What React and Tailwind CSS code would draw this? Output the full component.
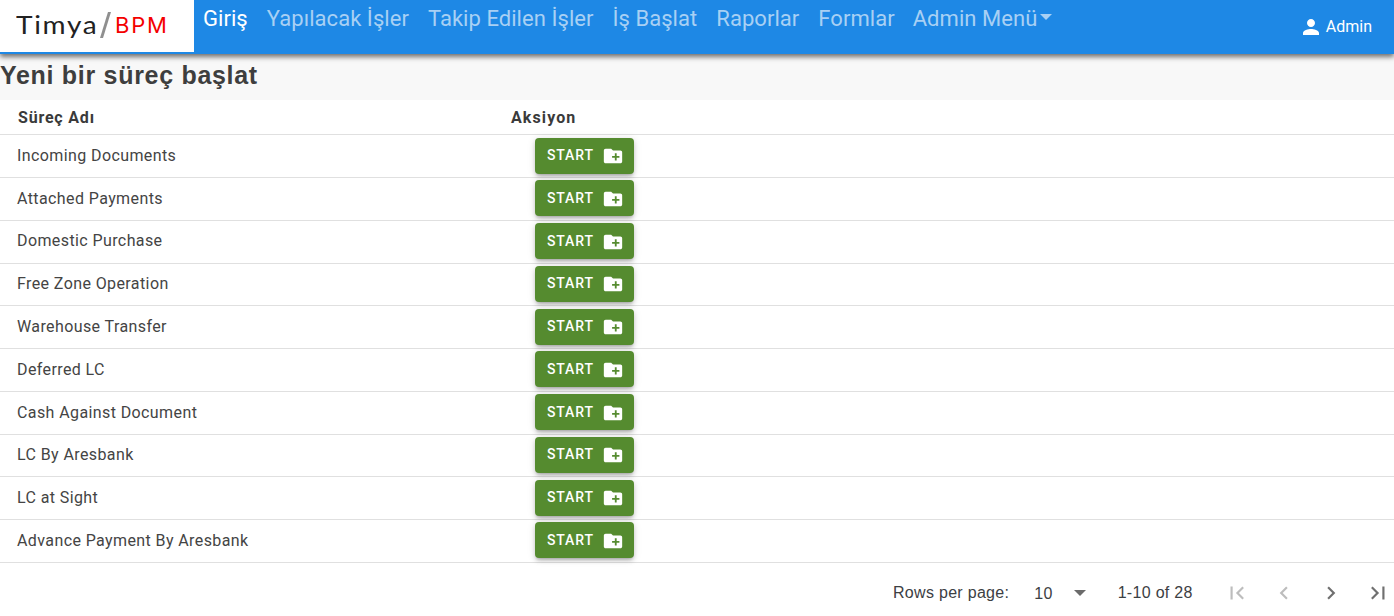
const rows = ["Incoming Documents","Attached Payments","Domestic Purchase","Free Zone Operation","Warehouse Transfer","Deferred LC","Cash Against Document","LC By Aresbank","LC at Sight","Advance Payment By Aresbank"];
const nav = ["Yapılacak İşler","Takip Edilen İşler","İş Başlat","Raporlar","Formlar"];

function FolderPlus() {
  return (
    <svg viewBox="0 0 24 24" width="22" height="22" fill="#fff" className="ml-[8px] mt-px">
      <path d="M20 6h-8l-2-2H4c-1.11 0-1.99.89-1.99 2L2 18c0 1.11.89 2 2 2h16c1.11 0 2-.89 2-2V8c0-1.11-.89-2-2-2zm-1 8h-3v3h-2v-3h-3v-2h3V9h2v3h3v2z" />
    </svg>
  );
}

function Chevron({ d, color }) {
  return (
    <svg viewBox="0 0 24 24" width="26" height="26" fill={color}><path d={d} /></svg>
  );
}

export default function App() {
  return (
    <div className="min-h-[616px] bg-white font-['Roboto',sans-serif] text-[#3c4043] overflow-hidden">
      <header className="relative z-10 flex h-[54px] bg-[#1e88e5] shadow-[0_3px_5px_rgba(0,0,0,0.55)]">
        <div className="flex h-[52px] w-[194px] items-center bg-white pb-[3px] pl-[16px]">
          <span className="w-[85px] origin-left scale-x-[1.12] font-['Lato',sans-serif] text-[25px] leading-none tracking-[1.5px] text-[#222]">Timya</span>
          <span className="ml-[3px] h-[26px] w-[3px] skew-x-[-17deg] bg-[#8f8f8f]"></span>
          <span className="ml-[8px] font-['Inter',sans-serif] text-[22px] leading-none tracking-[1.8px] text-[#f40000]">BPM</span>
        </div>
        <nav className="flex h-[36px] items-center pl-[9px] text-[22px] tracking-[0.05px]">
          <span className="text-white">Giriş</span>
          {nav.map((n) => (
            <span key={n} className="ml-[19px] text-[#a8d0f4]">{n}</span>
          ))}
          <span className="ml-[18px] text-[#a8d0f4]">Admin Menü</span>
          <span className="ml-[3px] mb-[3px] h-0 w-0 border-x-[6px] border-t-[6px] border-x-transparent border-t-[#a8d0f4]"></span>
        </nav>
        <div className="ml-auto mr-[22px] flex h-[54px] items-center text-white">
          <svg viewBox="0 0 24 24" width="24" height="24" fill="#fff"><path d="M12 12c2.21 0 4-1.79 4-4s-1.79-4-4-4-4 1.79-4 4 1.79 4 4 4zm0 2c-2.67 0-8 1.34-8 4v2h16v-2c0-2.66-5.33-4-8-4z" /></svg>
          <span className="ml-[3px] text-[16px]">Admin</span>
        </div>
      </header>

      <div className="flex h-[46px] items-center bg-[#f8f8f8] pb-[2px] font-['Liberation_Sans',sans-serif] text-[25px] font-bold tracking-[0.7px] text-[#3e3e3e]">Yeni bir süreç başlat</div>

      <div className="flex h-[35.3px] items-center border-b border-[#e0e0e0] pt-[1px] text-[16px] font-bold tracking-[0.8px] text-[#3a3a3a]">
        <div className="w-[511px] pl-[18px]">Süreç Adı</div>
        <div className="tracking-[1.1px]">Aksiyon</div>
      </div>
      {rows.map((r) => (
        <div key={r} className="flex h-[42.77px] items-center border-b border-[#e0e0e0] text-[16px] tracking-[0.4px] text-[#444]">
          <div className="-mt-[0.5px] w-[535px] pl-[17px]">{r}</div>
          <button className="-mt-[1.3px] flex h-[36px] w-[99px] items-center rounded-[4px] bg-[#558b2f] pl-[12px] text-[14px] font-medium tracking-[0.85px] text-white shadow-[0_3px_3px_-2px_rgba(0,0,0,0.2),0_3px_4px_0_rgba(0,0,0,0.14),0_1px_8px_0_rgba(0,0,0,0.12)]">
            START<FolderPlus />
          </button>
        </div>
      ))}

      <div className="flex h-[60px] items-center font-['Liberation_Sans',sans-serif] text-[16px] tracking-[0.3px] text-[#3c4043]">
        <span className="ml-[893px]">Rows per page:</span>
        <span className="ml-[25px] mt-[2px]">10</span>
        <span className="ml-[21px] h-0 w-0 border-x-[6px] border-t-[6px] border-x-transparent border-t-[#6b6b6b]"></span>
        <span className="ml-[32px]">1-10 of 28</span>
        <div className="ml-[31px] flex items-center gap-[21px]">
          <Chevron color="#bdbdbd" d="M18.41 16.59L13.82 12l4.59-4.59L17 6l-6 6 6 6zM6 6h2v12H6z" />
          <Chevron color="#bdbdbd" d="M15.41 7.41L14 6l-6 6 6 6 1.41-1.41L10.83 12z" />
          <Chevron color="#707070" d="M10 6L8.59 7.41 13.17 12l-4.58 4.59L10 18l6-6z" />
          <Chevron color="#707070" d="M5.59 7.41L10.18 12l-4.59 4.59L7 18l6-6-6-6zM16 6h2v12h-2z" />
        </div>
      </div>
    </div>
  );
}
